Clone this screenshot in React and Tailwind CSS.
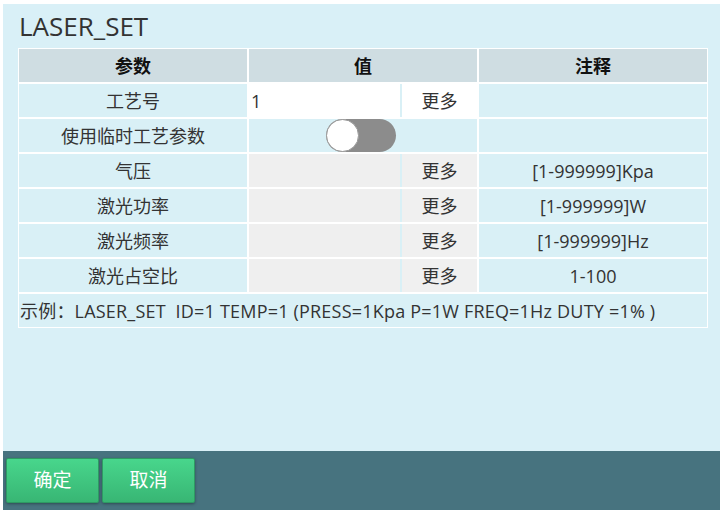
import React, { useState } from 'react';

const rows = [
  { name: '气压', note: '[1-999999]Kpa' },
  { name: '激光功率', note: '[1-999999]W' },
  { name: '激光频率', note: '[1-999999]Hz' },
  { name: '激光占空比', note: '1-100' },
];

const cell = 'border border-white h-[35px] p-0';

export default function App() {
  const [temp, setTemp] = useState(false);

  return (
    <div
      className="w-[720px] h-[510px] bg-white pl-[3px] pt-[4px] flex flex-col text-[#333]"
      style={{ fontFamily: '"Open Sans", "Noto Sans CJK SC", sans-serif' }}
    >
      <div className="flex-1 bg-[#d9f0f7] px-[15px]">
        <h1 className="text-[26px] leading-[26px] pt-[9px] pb-[9px] pl-[1px] text-[#333]">LASER_SET</h1>
        <table className="w-[690px] border-separate border-spacing-0 table-fixed text-[18px] leading-[24px]">
          <colgroup>
            <col className="w-[230px]" />
            <col className="w-[230px]" />
            <col className="w-[230px]" />
          </colgroup>
          <thead>
            <tr className="bg-[#cfdde2]">
              <th className={`${cell} font-bold text-[#111]`}>参数</th>
              <th className={`${cell} font-bold text-[#111]`}>值</th>
              <th className={`${cell} font-bold text-[#111]`}>注释</th>
            </tr>
          </thead>
          <tbody className="bg-[#d9f0f6]">
            <tr>
              <td className={`${cell} text-center`}>工艺号</td>
              <td className={cell}>
                <div className="flex h-full gap-[2px]">
                  <input
                    defaultValue="1"
                    className="w-[151px] h-[33px] bg-white px-[2px] text-[18px] outline-none"
                  />
                  <div className="flex-1 bg-white flex items-center justify-center">更多</div>
                </div>
              </td>
              <td className={cell}></td>
            </tr>
            <tr>
              <td className={`${cell} text-center`}>使用临时工艺参数</td>
              <td className={cell}>
                <div className="flex justify-center items-center h-[33px]">
                  <button
                    onClick={() => setTemp(!temp)}
                    className="relative w-[70px] h-[33px] rounded-full bg-[#8c8c8c] ml-[-4px]"
                  >
                    <span
                      className={`absolute top-0 ${temp ? 'right-0' : 'left-0'} w-[33px] h-[33px] rounded-full bg-white border border-[#999]`}
                    />
                  </button>
                </div>
              </td>
              <td className={cell}></td>
            </tr>
            {rows.map((r) => (
              <tr key={r.name}>
                <td className={`${cell} text-center`}>{r.name}</td>
                <td className={cell}>
                  <div className="flex h-full gap-[2px]">
                    <div className="w-[151px] h-[33px] bg-[#efefef]" />
                    <div className="flex-1 bg-[#f0f0f0] flex items-center justify-center">更多</div>
                  </div>
                </td>
                <td className={`${cell} text-center`}>{r.note}</td>
              </tr>
            ))}
            <tr>
              <td colSpan={3} className={`${cell} px-[1px] tracking-[0.2px]`}>
                示例：LASER_SET&nbsp; ID=1 TEMP=1 (PRESS=1Kpa P=1W FREQ=1Hz DUTY =1% )
              </td>
            </tr>
          </tbody>
        </table>
      </div>
      <div className="h-[59px] bg-[#47737f] flex items-start gap-[3px] pt-[7px] pl-[3px]">
        <button className="w-[93px] h-[45px] rounded-[2px] border border-[#2e9a63] bg-gradient-to-b from-[#48d68c] to-[#38b674] text-white text-[19px] shadow-[0_1px_3px_rgba(0,0,0,0.35)]">
          确定
        </button>
        <button className="w-[93px] h-[45px] rounded-[2px] border border-[#2e9a63] bg-gradient-to-b from-[#48d68c] to-[#38b674] text-white text-[19px] shadow-[0_1px_3px_rgba(0,0,0,0.35)]">
          取消
        </button>
      </div>
    </div>
  );
}
